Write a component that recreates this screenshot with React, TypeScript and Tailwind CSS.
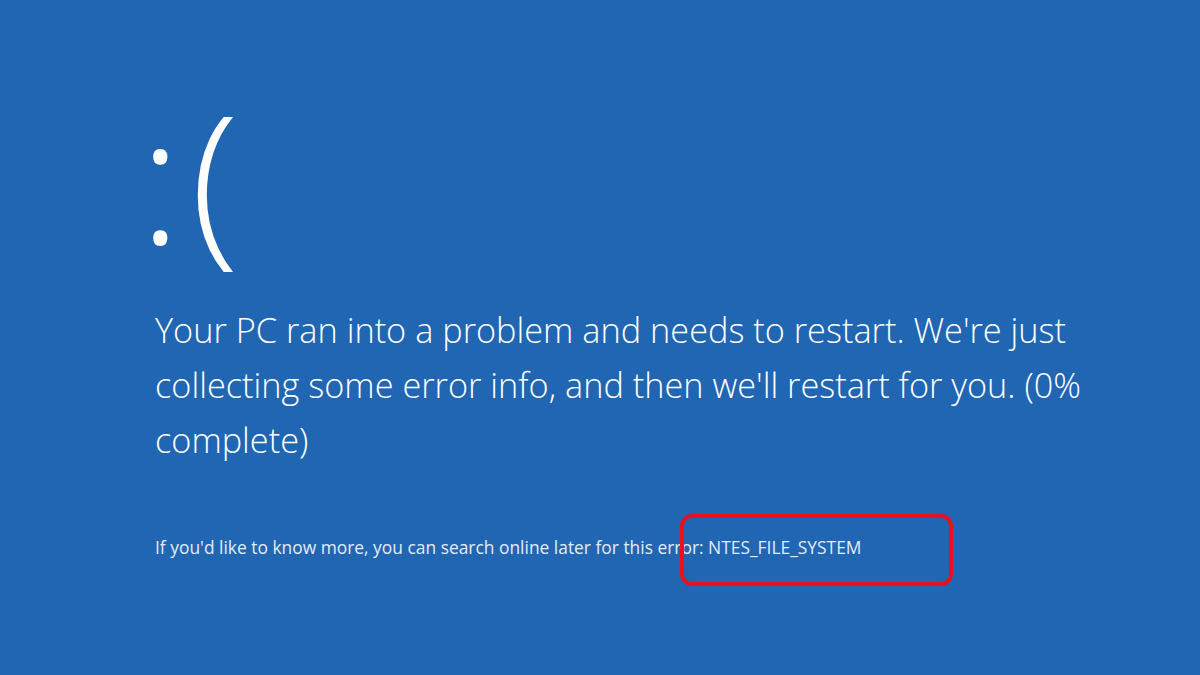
export default function App() {
  return (
    <div className="relative w-[1200px] h-[675px] overflow-hidden bg-[#2066b3] text-white" style={{ fontFamily: '"Open Sans", "Noto Sans", sans-serif' }}>
      <div className="pl-[148px] pt-[75px]">
        {/* sad face */}
        <div className="-ml-[9px] text-[178px] leading-[200px] font-light">
          <span className="mr-[9px]">:</span>(
        </div>

        {/* main message */}
        <p className="mt-[27px] w-[950px] text-[34.3px] leading-[55px] font-light pl-[7px]">
          Your PC ran into a problem and needs to restart. We're just collecting some error info, and then we'll restart for you. (0% complete)
        </p>

        <p className="mt-[70px] pl-[7px] text-[17.4px] leading-[20px] text-[#e4ecf6]">
          If you'd like to know more, you can search online later for this error: NTES_FILE_SYSTEM
        </p>
      </div>

      {/* highlight marker */}
      <div className="absolute left-[680px] top-[514px] w-[273px] h-[72px] rounded-[12px] border-[4px] border-[#e8111c]" />
    </div>
  );
}
